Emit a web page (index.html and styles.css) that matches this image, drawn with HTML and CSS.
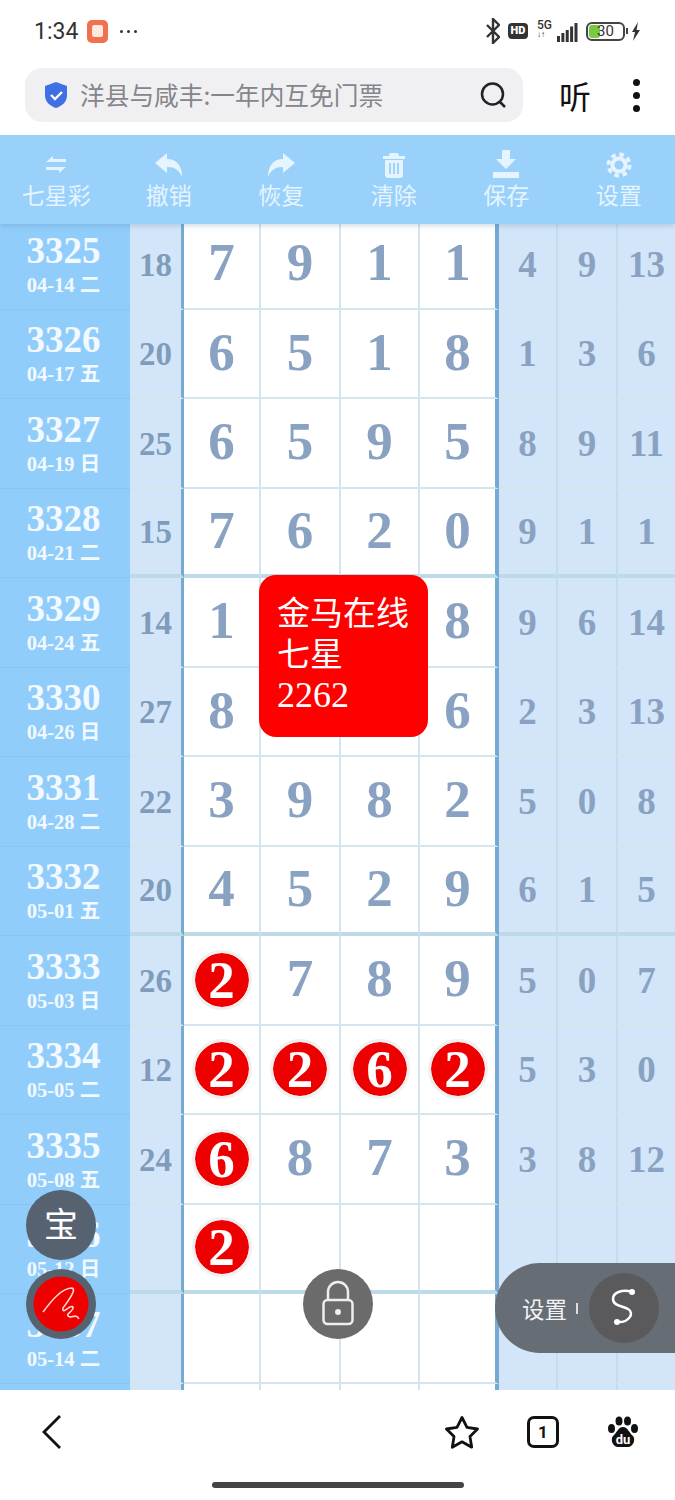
FILE: index.html
```html
<!DOCTYPE html>
<html lang="zh-CN">
<head>
    <meta charset="UTF-8">
    <meta name="viewport" content="width=device-width, initial-scale=1.0">
    <title>七星彩</title>
    <link rel="stylesheet" href="styles.css">
</head>
<body>
    <div class="phone">
        <!-- status bar -->
        <div class="status">
            <span class="clock">1:34</span>
            <span class="app-dot"><i></i></span>
            <span class="more"><i></i><i></i><i></i></span>
            <div class="status-right">
                <svg width="14" height="26" viewBox="0 0 14 26"><path d="M1 7l12 12-6 6V1l6 6L1 19" fill="none" stroke="#333" stroke-width="2.4"/></svg>
                <span class="hd">HD</span>
                <span class="net"><b>5G</b><i class="arrows">↓↑</i></span>
                <svg class="bars" width="21" height="19" viewBox="0 0 24 19" preserveAspectRatio="none"><rect x="0" y="13" width="3.4" height="6" fill="#333"/><rect x="5" y="10" width="3.4" height="9" fill="#333"/><rect x="10" y="7" width="3.4" height="12" fill="#333"/><rect x="15" y="3.500" width="3.4" height="15.500" fill="#333"/><rect x="20" y="0" width="3.4" height="19" fill="#333"/></svg>
                <span class="battery"><i></i><b>30</b></span>
                <span class="battery-tip"></span>
                <svg width="10" height="19" viewBox="0 0 10 19"><path d="M7 0L1 10h3l-2 9 7-11H5.500z" fill="#333"/></svg>
            </div>
        </div>

        <!-- address bar -->
        <div class="address">
            <div class="search">
                <svg width="24" height="28" viewBox="0 0 24 28"><path d="M12 1l11 4v9c0 7-5 11-11 13C6 25 1 21 1 14V5z" fill="#3f6fe4"/><path d="M7 14l4 4 7-7" fill="none" stroke="#fff" stroke-width="2.4"/></svg>
                <span class="search-text">洋县与咸丰:一年内互免门票</span>
                <svg class="search-icon" width="28" height="28" viewBox="0 0 28 28"><circle cx="13.500" cy="13" r="10.500" fill="none" stroke="#222" stroke-width="2.500"/><path d="M21 21l5 5" stroke="#222" stroke-width="2.500"/></svg>
            </div>
            <span class="listen">听</span>
            <div class="kebab"><i></i><i></i><i></i></div>
        </div>

        <!-- toolbar -->
        <div class="toolbar">
            <div class="tool">
                <svg width="26" height="26" viewBox="0 0 26 26"><path d="M3 10l7-6v3h13v3zM23 15l-7 6v-3H3v-3z" fill="#e6f4ff"/></svg>
                <span>七星彩</span>
            </div>
            <div class="tool">
                <svg width="30" height="26" viewBox="0 0 30 26"><path d="M1 11L13 1v6c10 0 15 7 15 18-3-7-7-10-15-10v6z" fill="#e6f4ff"/></svg>
                <span>撤销</span>
            </div>
            <div class="tool">
                <svg width="30" height="26" viewBox="0 0 30 26"><path d="M29 11L17 1v6C7 7 2 14 2 25c3-7 7-10 15-10v6z" fill="#e6f4ff"/></svg>
                <span>恢复</span>
            </div>
            <div class="tool">
                <svg width="24" height="26" viewBox="0 0 24 26"><path d="M8 1h8l1 3h6v3H1V4h6zM3 8h18v15a3 3 0 0 1-3 3H6a3 3 0 0 1-3-3z" fill="#e6f4ff"/><path d="M8 11v11M12 11v11M16 11v11" stroke="#99d1fb" stroke-width="1.800"/></svg>
                <span>清除</span>
            </div>
            <div class="tool">
                <svg width="28" height="28" viewBox="0 0 28 28"><path d="M10 0h8v9h6L14 19 4 9h6zM1 22h26v6H1z" fill="#e6f4ff"/></svg>
                <span>保存</span>
            </div>
            <div class="tool">
                <svg width="26" height="26" viewBox="0 0 26 26"><circle cx="13" cy="13" r="10.500" fill="none" stroke="#e6f4ff" stroke-width="4" stroke-dasharray="4.500 3.750"/><circle cx="13" cy="13" r="6.500" fill="none" stroke="#e6f4ff" stroke-width="4"/></svg>
                <span>设置</span>
            </div>
        </div>

        <!-- number table -->
        <div class="board">
            <div class="table">
                <div class="row">
                    <div class="issue"><b>3325</b><span>04-14 二</span></div><div class="sum">18</div>
                    <div class="cell">7</div><div class="cell">9</div><div class="cell">1</div><div class="cell end">1</div>
                    <div class="miss">4</div><div class="miss">9</div><div class="miss">13</div>
                </div>
                <div class="row">
                    <div class="issue"><b>3326</b><span>04-17 五</span></div><div class="sum">20</div>
                    <div class="cell">6</div><div class="cell">5</div><div class="cell">1</div><div class="cell end">8</div>
                    <div class="miss">1</div><div class="miss">3</div><div class="miss">6</div>
                </div>
                <div class="row">
                    <div class="issue"><b>3327</b><span>04-19 日</span></div><div class="sum">25</div>
                    <div class="cell">6</div><div class="cell">5</div><div class="cell">9</div><div class="cell end">5</div>
                    <div class="miss">8</div><div class="miss">9</div><div class="miss">11</div>
                </div>
                <div class="row thick">
                    <div class="issue"><b>3328</b><span>04-21 二</span></div><div class="sum">15</div>
                    <div class="cell">7</div><div class="cell">6</div><div class="cell">2</div><div class="cell end">0</div>
                    <div class="miss">9</div><div class="miss">1</div><div class="miss">1</div>
                </div>
                <div class="row">
                    <div class="issue"><b>3329</b><span>04-24 五</span></div><div class="sum">14</div>
                    <div class="cell">1</div><div class="cell"></div><div class="cell"></div><div class="cell end">8</div>
                    <div class="miss">9</div><div class="miss">6</div><div class="miss">14</div>
                </div>
                <div class="row">
                    <div class="issue"><b>3330</b><span>04-26 日</span></div><div class="sum">27</div>
                    <div class="cell">8</div><div class="cell"></div><div class="cell"></div><div class="cell end">6</div>
                    <div class="miss">2</div><div class="miss">3</div><div class="miss">13</div>
                </div>
                <div class="row">
                    <div class="issue"><b>3331</b><span>04-28 二</span></div><div class="sum">22</div>
                    <div class="cell">3</div><div class="cell">9</div><div class="cell">8</div><div class="cell end">2</div>
                    <div class="miss">5</div><div class="miss">0</div><div class="miss">8</div>
                </div>
                <div class="row thick">
                    <div class="issue"><b>3332</b><span>05-01 五</span></div><div class="sum">20</div>
                    <div class="cell">4</div><div class="cell">5</div><div class="cell">2</div><div class="cell end">9</div>
                    <div class="miss">6</div><div class="miss">1</div><div class="miss">5</div>
                </div>
                <div class="row">
                    <div class="issue"><b>3333</b><span>05-03 日</span></div><div class="sum">26</div>
                    <div class="cell"><span class="ball">2</span></div><div class="cell">7</div><div class="cell">8</div><div class="cell end">9</div>
                    <div class="miss">5</div><div class="miss">0</div><div class="miss">7</div>
                </div>
                <div class="row">
                    <div class="issue"><b>3334</b><span>05-05 二</span></div><div class="sum">12</div>
                    <div class="cell"><span class="ball">2</span></div><div class="cell"><span class="ball">2</span></div><div class="cell"><span class="ball">6</span></div><div class="cell end"><span class="ball">2</span></div>
                    <div class="miss">5</div><div class="miss">3</div><div class="miss">0</div>
                </div>
                <div class="row">
                    <div class="issue"><b>3335</b><span>05-08 五</span></div><div class="sum">24</div>
                    <div class="cell"><span class="ball">6</span></div><div class="cell">8</div><div class="cell">7</div><div class="cell end">3</div>
                    <div class="miss">3</div><div class="miss">8</div><div class="miss">12</div>
                </div>
                <div class="row thick">
                    <div class="issue"><b>3336</b><span>05-12 日</span></div><div class="sum"></div>
                    <div class="cell"><span class="ball">2</span></div><div class="cell"></div><div class="cell"></div><div class="cell end"></div>
                    <div class="miss"></div><div class="miss"></div><div class="miss"></div>
                </div>
                <div class="row">
                    <div class="issue"><b>3337</b><span>05-14 二</span></div><div class="sum"></div>
                    <div class="cell"></div><div class="cell"></div><div class="cell"></div><div class="cell end"></div>
                    <div class="miss"></div><div class="miss"></div><div class="miss"></div>
                </div>
                <div class="row">
                    <div class="issue"></div><div class="sum"></div>
                    <div class="cell"></div><div class="cell"></div><div class="cell"></div><div class="cell end"></div>
                    <div class="miss"></div><div class="miss"></div><div class="miss"></div>
                </div>
            </div>

            <!-- things floating over the table -->
            <div class="note">金马在线<br>七星<br><span class="note-num">2262</span></div>
            <div class="fab fab-bao">宝</div>
            <div class="fab fab-sign">
                <svg width="70" height="70" viewBox="0 0 70 70"><circle cx="35" cy="35" r="27.500" fill="#ee0000"/><path d="M17 43C26 31 36 19 46 19C51 20 42 32 37 39C36 47 44 35 47 38C48 43 37 45 44 48C49 47 51 46 53 50" fill="none" stroke="#ffd9cf" stroke-width="1.600"/></svg>
            </div>
            <div class="fab fab-lock">
                <svg width="70" height="70" viewBox="0 0 70 70"><rect x="20.500" y="31" width="29" height="24" rx="4" fill="none" stroke="#eee" stroke-width="2.500"/><path d="M25 31v-8a10 10 0 0 1 20 0v8" fill="none" stroke="#eee" stroke-width="2.500"/><circle cx="35" cy="43" r="3" fill="#eee"/></svg>
            </div>
            <div class="pill">
                <span>设置</span><i class="pill-tick"></i>
                <div class="pill-btn">
                    <svg width="70" height="70" viewBox="0 0 70 70"><path d="M43 19C34 16 24 19 24 26C24 33 34 33 39 36C46 40 40 50 28 49" fill="none" stroke="#fff" stroke-width="2.500"/><circle cx="43" cy="19" r="3" fill="#fff"/><circle cx="28" cy="49" r="3" fill="#fff"/></svg>
                </div>
            </div>
        </div>

        <!-- browser bottom bar -->
        <div class="bottom">
            <svg class="back" width="22" height="36" viewBox="0 0 22 36"><path d="M19 2L3 18l16 16" fill="none" stroke="#111" stroke-width="2.800"/></svg>
            <svg class="star" width="36" height="34" viewBox="0 0 36 34"><path d="M18 2.500l5 9.800 10.500 1.700-7.500 7.600 1.700 10.600L18 26.800l-9.700 5.400L10 21.600 2.500 14 13 12.300z" fill="none" stroke="#111" stroke-width="2.800" stroke-linejoin="round"/></svg>
            <span class="tabs">1</span>
            <svg class="paw" width="32" height="32" viewBox="0 0 32 32"><ellipse cx="4.500" cy="12.500" rx="3.500" ry="4.500" fill="#111"/><ellipse cx="12" cy="5" rx="3.500" ry="4.500" fill="#111"/><ellipse cx="20.500" cy="5" rx="3.500" ry="4.500" fill="#111"/><ellipse cx="27.500" cy="12.500" rx="3.500" ry="4.500" fill="#111"/><path d="M16 11c5 0 6 6 10 9 3 4 0 11-5 11H11c-5 0-8-7-5-11 4-3 5-9 10-9z" fill="#111"/><text x="16" y="28" class="paw-text">du</text></svg>
        </div>
        <div class="home-bar"><i></i></div>
    </div>
</body>
</html>
```

FILE: styles.css
```css
* {
    box-sizing: border-box;
}
body {
    margin: 0;
    background: #fff;
    font-family: "Noto Sans CJK SC", Roboto, sans-serif;
}
.phone {
    width: 675px;
    height: 1500px;
    display: flex;
    flex-direction: column;
    overflow: hidden;
}

/* status bar */
.status {
    height: 62px;
    flex: none;
    padding-left: 34px;
    padding-right: 34px;
    display: flex;
    align-items: center;
    color: #333;
}
.clock {
    font-family: Roboto, sans-serif;
    font-size: 23px;
    width: 53px;
}
.app-dot {
    width: 21px;
    height: 23px;
    border-radius: 5px;
    background: #f0714d;
    display: flex;
    align-items: center;
    justify-content: center;
}
.app-dot i {
    width: 11px;
    height: 12px;
    border-radius: 2px;
    background: #ffe9dc;
}
.more {
    margin-left: 12px;
    display: flex;
    gap: 4px;
}
.more i {
    width: 3px;
    height: 3px;
    border-radius: 50%;
    background: #333;
}
.status-right {
    margin-left: auto;
    display: flex;
    align-items: center;
}
.hd {
    margin-left: 8px;
    width: 20px;
    height: 16px;
    border-radius: 4px;
    background: #333;
    color: #fff;
    font-family: Roboto, sans-serif;
    font-size: 11px;
    font-weight: 900;
    line-height: 16px;
    text-align: center;
}
.net {
    margin-left: 9px;
    width: 18px;
    display: flex;
    flex-direction: column;
    font-family: Roboto, sans-serif;
    line-height: 10px;
    margin-top: -2px;
}
.net b {
    font-size: 12px;
    font-weight: 500;
}
.net .arrows {
    font-size: 8px;
    font-style: normal;
}
.bars {
    margin-left: 2px;
    margin-top: 2px;
}
.battery {
    margin-left: 8px;
    width: 39px;
    height: 19px;
    border: 2px solid #444;
    border-radius: 6px;
    position: relative;
    display: flex;
    align-items: center;
    justify-content: center;
    background: #fff;
}
.battery i {
    position: absolute;
    left: 1px;
    top: 1px;
    bottom: 1px;
    width: 11px;
    border-radius: 3px;
    background: #7ac943;
}
.battery b {
    position: relative;
    font-family: Roboto, sans-serif;
    font-size: 15px;
    font-weight: 400;
    color: #333;
}
.battery-tip {
    width: 2px;
    height: 6px;
    margin-left: 1px;
    margin-right: 3px;
    background: #444;
}

/* address bar */
.address {
    height: 60px;
    flex: none;
    margin-top: 6px;
    margin-bottom: 7px;
    padding-left: 25px;
    display: flex;
    align-items: flex-start;
}
.search {
    width: 498px;
    height: 54px;
    border-radius: 17px;
    background: #f0f0f2;
    padding-left: 19px;
    padding-right: 16px;
    display: flex;
    align-items: center;
}
.search-text {
    margin-left: 12px;
    font-size: 24.700px;
    line-height: 52px;
    height: 54px;
    color: #85858b;
    white-space: nowrap;
}
.search-icon {
    margin-left: auto;
}
.listen {
    margin-left: 36px;
    font-size: 32px;
    line-height: 54px;
    color: #111;
}
.kebab {
    margin-left: 42px;
    height: 54px;
    display: flex;
    flex-direction: column;
    align-items: center;
    justify-content: center;
    gap: 6px;
}
.kebab i {
    width: 7px;
    height: 7px;
    border-radius: 50%;
    background: #111;
}

/* toolbar */
.toolbar {
    height: 89px;
    flex: none;
    position: relative;
    z-index: 2;
    background: #99d1fb;
    box-shadow: 0 2px 5px rgba(80, 120, 160, 0.25);
    display: grid;
    grid-template-columns: repeat(6, 1fr);
}
.tool {
    display: flex;
    flex-direction: column;
    align-items: center;
    justify-content: flex-end;
    padding-bottom: 15px;
    color: #e6f4ff;
    font-size: 23px;
    line-height: 30px;
}
.tool svg {
    margin-bottom: 1px;
}

/* number table */
.board {
    flex: 1;
    min-height: 0;
    position: relative;
    overflow: hidden;
    background: #fff;
}
.table {
    margin-top: -4px;
    font-family: "Liberation Serif", "Noto Sans CJK SC", serif;
    font-weight: 700;
}
.row {
    height: 89.500px;
    display: grid;
    grid-template-columns: 130px 54px 77px 80px 79px 79px 59px 60px 57px;
}
.row > div {
    display: flex;
    align-items: center;
    justify-content: center;
    border-bottom: 2px solid #d4e5ee;
}
.row.thick > div {
    border-bottom: 4px solid #bcdae8;
}
.issue {
    flex-direction: column;
    background: #91cdfb;
    color: #f2f9ff;
    padding-top: 2px;
    padding-right: 3px;
}
.row > .issue,
.row.thick > .issue {
    border-bottom-color: #8ac5f2;
    border-bottom-width: 1px;
}
.issue b {
    font-size: 37px;
    line-height: 38px;
}
.issue span {
    font-size: 20.500px;
    line-height: 28px;
    margin-top: 1px;
}
.sum {
    background: #d3e6f9;
    color: #7f9cbc;
    font-size: 33px;
    padding-top: 3px;
    border-right: 3px solid #76aad0;
}
.cell {
    color: #8aa2c2;
    font-size: 53px;
    padding-bottom: 3px;
    border-right: 2px solid #d4e5ee;
}
.cell.end {
    border-right: 4px solid #76aad0;
}
.miss {
    background: #d3e6f9;
    color: #8aa2c2;
    font-size: 37px;
    padding-top: 1px;
    border-right: 2px solid #c4dcec;
}
.row > .miss:last-child {
    border-right: none;
}
.ball {
    margin-top: 3px;
    width: 60px;
    height: 60px;
    border-radius: 50%;
    background: #ee0000;
    border: 3px solid #f0f0f0;
    background-clip: padding-box;
    color: #fff;
    font-size: 53px;
    line-height: 54px;
    text-align: center;
}

/* floating things */
.note {
    position: absolute;
    left: 259px;
    top: 351px;
    width: 169px;
    height: 162px;
    padding: 16px 0 0 18px;
    border-radius: 17px;
    background: #ff0000;
    color: #fff;
    font-size: 33px;
    line-height: 41px;
}
.note-num {
    font-family: "Liberation Serif", serif;
    font-size: 36px;
}
.fab {
    position: absolute;
    width: 70px;
    height: 70px;
    border-radius: 50%;
}
.fab-bao {
    left: 26px;
    top: 966px;
    background: #566270;
    color: #fff;
    font-size: 34px;
    line-height: 66px;
    text-align: center;
}
.fab-sign {
    left: 26px;
    top: 1045px;
    background: #566270;
}
.fab-lock {
    left: 303px;
    top: 1045px;
    background: #6b6b6b;
}
.pill {
    position: absolute;
    left: 495px;
    top: 1039px;
    right: 0;
    height: 90px;
    border-radius: 45px 0 0 45px;
    background: #666d75;
    color: #f2f2f2;
    font-size: 22.500px;
    padding-left: 27px;
    display: flex;
    align-items: center;
}
.pill-tick {
    margin-left: 9px;
    width: 2px;
    height: 11px;
    background: #ddd;
}
.pill-btn {
    margin-left: 11px;
    width: 70px;
    height: 70px;
    border-radius: 50%;
    background: #5a5a5c;
}

/* bottom bar */
.bottom {
    height: 82px;
    flex: none;
    display: flex;
    align-items: center;
    padding-top: 1px;
}
.back {
    margin-left: 41px;
}
.star {
    margin-left: 381px;
}
.tabs {
    margin-left: 47px;
    width: 32px;
    height: 32px;
    border: 3px solid #111;
    border-radius: 7px;
    font-family: Roboto, sans-serif;
    font-size: 17px;
    font-weight: 700;
    line-height: 26px;
    text-align: center;
    color: #111;
}
.paw {
    margin-left: 48px;
}
.paw-text {
    font-family: Roboto, sans-serif;
    font-size: 13px;
    font-weight: 700;
    fill: #fff;
    text-anchor: middle;
}
.home-bar {
    height: 28px;
    flex: none;
    display: flex;
    justify-content: center;
    padding-top: 10px;
}
.home-bar i {
    width: 252px;
    height: 6px;
    border-radius: 3px;
    background: #444;
}
```
